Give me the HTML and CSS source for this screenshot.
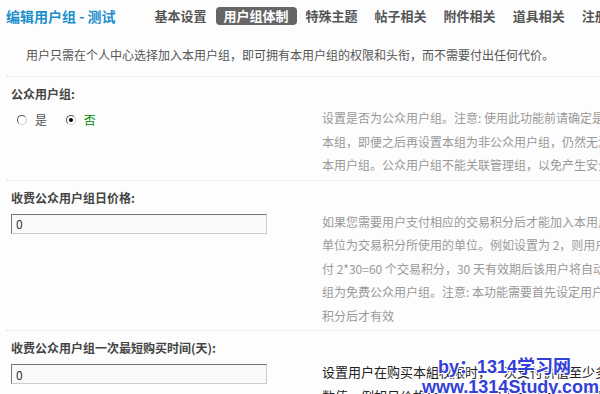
FILE: index.html
```html
<!DOCTYPE html>
<html lang="zh-CN">
<head>
    <meta charset="UTF-8">
    <meta name="viewport" content="width=device-width, initial-scale=1.0">
    <title>编辑用户组 - 测试</title>
    <link rel="stylesheet" href="styles.css">
</head>
<body>
    <div class="page">
        <div class="header">
            <h3 class="title">编辑用户组 - 测试</h3>
            <ul class="tabs">
                <li>基本设置</li>
                <li class="current">用户组体制</li>
                <li>特殊主题</li>
                <li>帖子相关</li>
                <li>附件相关</li>
                <li>道具相关</li>
                <li>注册相关</li>
            </ul>
        </div>

        <div class="intro">用户只需在个人中心选择加入本用户组，即可拥有本用户组的权限和头衔，而不需要付出任何代价。</div>

        <div class="row">
            <div class="row-title">公众用户组:</div>
            <div class="row-body">
                <div class="field">
                    <label class="radio"><span class="dot"></span>是</label>
                    <label class="radio checked"><span class="dot"></span>否</label>
                </div>
                <div class="tip">设置是否为公众用户组。注意: 使用此功能前请确定是否允许用户自由加入<br>本组，即便之后再设置本组为非公众用户组，仍然无法清除已加入的用户<br>本用户组。公众用户组不能关联管理组，以免产生安全问题</div>
            </div>
        </div>

        <div class="row">
            <div class="row-title">收费公众用户组日价格:</div>
            <div class="row-body">
                <div class="field">
                    <input class="text" type="text" value="0">
                </div>
                <div class="tip">如果您需要用户支付相应的交易积分后才能加入本用户组，请设置日价格<br>单位为交易积分所使用的单位。例如设置为 2，则用户加入 30 天需要支<br>付 2*30=60 个交易积分，30 天有效期后该用户将自动退出。0 为设置本<br>组为免费公众用户组。注意: 本功能需要首先设定用户交易所使用的<br>积分后才有效</div>
            </div>
        </div>

        <div class="row">
            <div class="row-title">收费公众用户组一次最短购买时间(天):</div>
            <div class="row-body">
                <div class="field">
                    <input class="text" type="text" value="0">
                </div>
                <div class="tip active">设置用户在购买本組权限时，一次支付价值至少多少天的<br>数值。例如日价格为 2，最短购买时间为 30，则用户</div>
            </div>
        </div>

        <div class="stamp">
            <span class="stamp-by">by：1314学习网</span>
            <span>www.1314Study.com</span>
        </div>
    </div>
</body>
</html>
```

FILE: styles.css
```css
body {
    margin: 0;
    padding: 0;
    background-color: #fdfdfd;
    font-family: "Noto Sans CJK SC", "DejaVu Sans", sans-serif;
    font-size: 12px;
    color: #666;
    overflow: hidden;
}

.page {
    position: relative;
    width: 900px;
    padding-left: 6px;
}

.header {
    display: flex;
    align-items: center;
    height: 32px;
}

.title {
    margin: 0 31px 0 0;
    font-size: 14px;
    line-height: 20px;
    color: #1b8fcc;
}

.tabs {
    display: flex;
    gap: 1px;
    margin: 0;
    padding: 0;
    list-style: none;
}

.tabs li {
    padding: 0 8px;
    height: 18px;
    line-height: 18px;
    font-size: 13px;
    font-weight: bold;
    color: #555;
    white-space: nowrap;
    border-radius: 4px;
}

.tabs li.current {
    background-color: #666;
    color: #fff;
}

.intro {
    padding: 11px 0 9px 20px;
    line-height: 24px;
    color: #555;
    border-bottom: 1px dotted #d3e6f3;
}

.row {
    padding: 5px 0 3px 5px;
    border-bottom: 1px dotted #d3e6f3;
}

.row-title {
    line-height: 24px;
    font-weight: bold;
    color: #444;
}

.row-body {
    display: flex;
}

.field {
    flex: none;
    width: 311px;
    padding-top: 4px;
}

.tip {
    line-height: 23.5px;
    color: #999;
    white-space: nowrap;
}

.tip.active {
    font-size: 13px;
    color: #222;
}

.radio {
    display: inline-flex;
    align-items: center;
    gap: 8px;
    margin: 0 10px 0 6px;
    line-height: 20px;
    color: #555;
}

.radio.checked {
    color: #080;
}

.dot {
    position: relative;
    width: 8px;
    height: 8px;
    border: 1px solid;
    border-color: #555 #ccc #ccc #555;
    border-radius: 50%;
    background-color: #fff;
}

.radio.checked .dot::after {
    content: "";
    position: absolute;
    left: 2px;
    top: 2px;
    width: 4px;
    height: 4px;
    border-radius: 50%;
    background-color: #000;
}

.text {
    box-sizing: border-box;
    width: 256px;
    height: 20px;
    margin: 0;
    padding: 0 4px;
    font-family: "Noto Sans CJK SC", "DejaVu Sans", sans-serif;
    font-size: 12px;
    color: #333;
    background-color: #f9f9f9;
    border: 1px solid;
    border-color: #777 #ccc #ccc #777;
    outline: none;
}

.stamp {
    position: absolute;
    left: 422px;
    top: 357px;
    display: flex;
    flex-direction: column;
    font-family: "Liberation Sans", "Noto Sans CJK SC", sans-serif;
    font-size: 18px;
    font-weight: bold;
    line-height: 20px;
    color: #3340d8;
    white-space: nowrap;
    text-shadow: 1px 1px 0 #fff, -1px -1px 0 #fff, 1px -1px 0 #fff, -1px 1px 0 #fff;
}

.stamp-by {
    padding-left: 16px;
}
```
